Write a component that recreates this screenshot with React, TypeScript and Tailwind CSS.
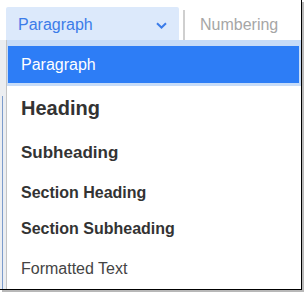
import React from 'react';

const items = [
  { label: 'Heading', className: 'h-[44px] text-[20px] font-bold text-[#333]' },
  { label: 'Subheading', className: 'h-[45px] text-[17px] font-bold text-[#333]' },
  { label: 'Section Heading', className: 'h-[35px] text-[16px] font-bold text-[#333]' },
  { label: 'Section Subheading', className: 'h-[38px] text-[16px] font-bold text-[#333]' },
  { label: 'Formatted Text', className: 'h-[41px] text-[16px] text-[#444]' },
];

const App: React.FC = () => {
  return (
    <div className="w-[307px] h-[295px] bg-white overflow-hidden" style={{ fontFamily: '"Liberation Sans", Arial, sans-serif' }}>
      <div className="w-[302px] h-[290px] border-r border-b border-black shadow-[2px_2px_0_#b8b8b8] flex flex-col">
        {/* toolbar */}
        <div className="h-[40px] flex items-end">
          <div className="w-[6px]" />
          <button className="w-[173px] h-[33px] bg-[#dce9fb] rounded-t-[2px] flex items-center justify-between pl-[12px] pr-[12px] pt-[2px]">
            <span className="text-[16px] text-[#3b7ce9]">Paragraph</span>
            <svg width="11" height="7" viewBox="0 0 11 7" className="mt-[2px]">
              <path d="M1 1.2 L5.5 5.5 L10 1.2" fill="none" stroke="#3b7ce9" strokeWidth="2" />
            </svg>
          </button>
          <div className="w-[4px]" />
          <div className="w-[2px] h-[30px] bg-[#cfcfcf]" />
          <div className="h-[33px] flex items-center pl-[15px] pt-[2px] text-[16px] text-[#a6a6a6]">Numbering</div>
        </div>

        {/* dropdown */}
        <div className="flex-1 flex">
          <div className="w-[6px] bg-[#eceef1] flex">
            <div className="w-[2px]" />
            <div className="w-[1px] mt-[56px] bg-[#7d9ccc]" />
          </div>
          <div className="flex-1 border-l border-[#c4c4c4] bg-white flex flex-col">
            <div className="bg-[#c7dcf8] pt-[6px] pb-[3px] pl-[1px] pr-[2px]">
              <div className="h-[37px] bg-[#2d7df6] flex items-center pl-[13px] text-[16px] text-white">
                Paragraph
              </div>
            </div>
            {items.map((item) => (
              <div key={item.label} className={`flex items-center pl-[14px] ${item.className}`}>
                {item.label}
              </div>
            ))}
          </div>
        </div>
      </div>
    </div>
  );
};

export default App;
